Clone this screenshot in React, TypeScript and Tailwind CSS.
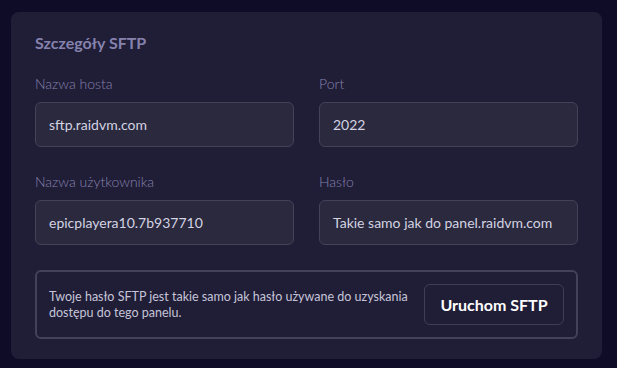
export default function App() {
  const field = (label: string, value: string) => (
    <div className="flex flex-col">
      <label className="text-[14px] leading-5 font-light text-[#8683ad]">{label}</label>
      <div className="mt-2 flex h-[45px] items-center whitespace-nowrap rounded-md border border-[#434259] bg-[#2a293e] px-[13px] text-[14px] text-[#d4d3e2]">
        {value}
      </div>
    </div>
  );

  return (
    <div
      className="min-h-screen bg-[#0e0c27] pl-[11px] pr-[15px] pt-3"
      style={{ fontFamily: 'Lato, "Open Sans", sans-serif' }}
    >
      <div className="h-[347px] w-[591px] rounded-lg bg-[#201d37] px-6 pt-[19px]">
        <h2 className="text-[16px] leading-6 font-bold text-[#8582ae]">Szczegóły SFTP</h2>
        <div className="mt-[19px] grid grid-cols-2 gap-x-[25px] gap-y-[25px]">
          {field('Nazwa hosta', 'sftp.raidvm.com')}
          {field('Port', '2022')}
          {field('Nazwa użytkownika', 'epicplayera10.7b937710')}
          {field('Hasło', 'Takie samo jak do panel.raidvm.com')}
        </div>
        <div className="mt-[25px] flex h-[69px] items-center justify-between rounded-md border-2 border-[#43425a] pl-3 pr-3">
          <p className="text-[12.5px] leading-4 text-[#c6c5d8]">
            Twoje hasło SFTP jest takie samo jak hasło używane do uzyskania
            <br />
            dostępu do tego panelu.
          </p>
          <button className="flex h-[41px] w-[140px] items-center justify-center rounded-md border border-[#3f3d57] text-[16px] font-bold text-white">
            Uruchom SFTP
          </button>
        </div>
      </div>
    </div>
  );
}
